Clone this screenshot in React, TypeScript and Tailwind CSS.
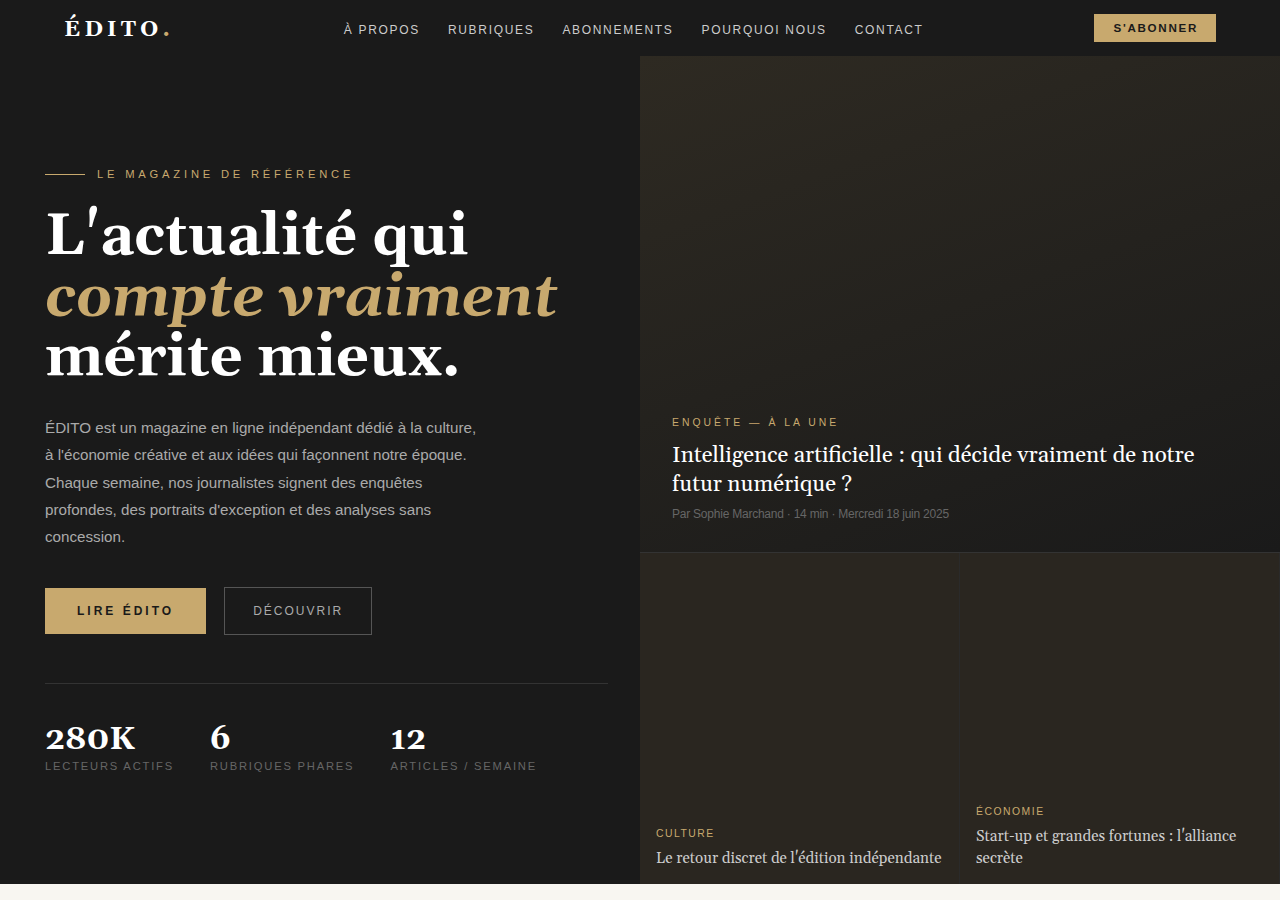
const navLinks = ["À propos", "Rubriques", "Abonnements", "Pourquoi nous", "Contact"];

const stats = [
  { value: "280K", label: "Lecteurs actifs" },
  { value: "6", label: "Rubriques phares" },
  { value: "12", label: "Articles / semaine" },
];

export default function App() {
  return (
    <div className="h-[900px] overflow-hidden bg-[#f8f6f1] font-['Liberation_Sans',Arial,sans-serif]">
      <Header />
      <main className="grid h-[828px] grid-cols-2 bg-[#1a1a1a]">
        <Hero />
        <FeaturedArticles />
      </main>
    </div>
  );
}

function Header() {
  return (
    <header className="flex h-14 items-center justify-between bg-[#1a1a1a] px-16">
      <a href="#" className="pt-[3px] font-[Georgia,Gelasio,serif] text-[22.4px] font-bold tracking-[4px] text-white">
        ÉDITO<span className="text-[#c8a96e]">.</span>
      </a>
      <nav className="flex gap-7 pt-1">
        {navLinks.map((link) => (
          <a key={link} href="#" className="text-[12px] tracking-[1.68px] text-[#ccc] uppercase">
            {link}
          </a>
        ))}
      </nav>
      <a href="#" className="flex h-7 items-center bg-[#c8a96e] pr-[18px] pl-5 text-[11.6px] font-bold tracking-[1.7px] text-[#1a1a1a] uppercase">
        S'abonner
      </a>
    </header>
  );
}

function Hero() {
  return (
    <section className="flex flex-col justify-center pr-8 pl-[45px]">
      <div className="flex items-center gap-3 text-[11.2px] leading-[18px] tracking-[3.8px] text-[#c8a96e] uppercase">
        <span className="h-px w-10 bg-[#c8a96e]" />
        Le magazine de référence
      </div>
      <h1 className="mt-[25px] font-[Georgia,Gelasio,serif] text-[57.6px] leading-[60.5px] font-bold whitespace-nowrap text-white">
        L'actualité qui
        <br />
        <em className="text-[#c8a96e]">compte vraiment</em>
        <br />
        mérite mieux.
      </h1>
      <p className="mt-6 max-w-[440px] text-[15.2px] leading-[27.36px] text-[#aaa]">
        ÉDITO est un magazine en ligne indépendant dédié à la culture, à l'économie créative et aux
        idées qui façonnent notre époque. Chaque semaine, nos journalistes signent des enquêtes
        profondes, des portraits d'exception et des analyses sans concession.
      </p>
      <div className="mt-9 flex items-center gap-[18px]">
        <a href="#" className="flex h-[46px] items-center bg-[#c8a96e] px-8 text-[12px] font-bold tracking-[3px] text-[#1a1a1a] uppercase">
          Lire Édito
        </a>
        <a href="#" className="flex h-12 items-center border border-[#555] px-7 text-[12px] tracking-[2.02px] text-[#aaa] uppercase">
          Découvrir
        </a>
      </div>
      <div className="mt-12 flex gap-9 border-t border-[#333] pt-[38px]">
        {stats.map((stat) => (
          <div key={stat.label}>
            <div className="font-[Georgia,Gelasio,serif] text-[32px] leading-[35px] font-bold text-white">
              {stat.value}
            </div>
            <div className="text-[11.2px] leading-[18px] tracking-[1.8px] text-[#666] uppercase">
              {stat.label}
            </div>
          </div>
        ))}
      </div>
    </section>
  );
}

function FeaturedArticles() {
  return (
    <section className="grid grid-rows-[497px_331px]">
      <article className="flex flex-col justify-end border-b border-[#333] bg-[linear-gradient(160deg,#2e2a22_0%,#1a1a1a_100%)] px-8 pb-7">
        <p className="text-[10.4px] leading-4 tracking-[3px] text-[#c8a96e] uppercase">Enquête — À la une</p>
        <h2 className="mt-2.5 font-[Georgia,Gelasio,serif] text-[22.4px] leading-[29.1px] text-white">
          Intelligence artificielle : qui décide vraiment de notre futur numérique ?
        </h2>
        <p className="mt-1.5 text-[12px] leading-[19px] tracking-[-0.23px] text-[#666]">
          Par Sophie Marchand · 14 min · Mercredi 18 juin 2025
        </p>
      </article>
      <div className="grid grid-cols-2">
        <SmallArticle category="Culture" title="Le retour discret de l'édition indépendante" />
        <SmallArticle category="Économie" title="Start-up et grandes fortunes : l'alliance secrète" />
      </div>
    </section>
  );
}

function SmallArticle({ category, title }: { category: string; title: string }) {
  return (
    <article className="flex flex-col justify-end border-r border-[#2a2a2a] bg-[#2a2620] px-4 pb-3.5">
      <p className="text-[10.4px] leading-4 tracking-[1.5px] text-[#c8a96e] uppercase">{category}</p>
      <h3 className="mt-1.5 font-[Georgia,Gelasio,serif] text-[15.2px] leading-[22px] text-[#ccc]">{title}</h3>
    </article>
  );
}
